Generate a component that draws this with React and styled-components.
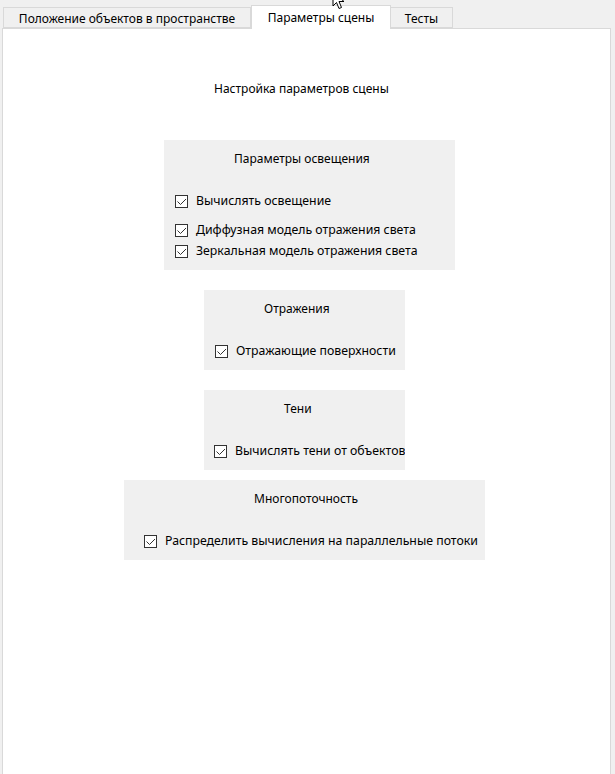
import React from 'react'
import styled, { createGlobalStyle } from 'styled-components'

const Global = createGlobalStyle`
  html, body { margin: 0; padding: 0; }
  body {
    background: #f0f0f0;
    font-family: "Noto Sans", "Liberation Sans", sans-serif;
    font-size: 12px;
    color: #000;
  }
`

const Window = styled.div`
  position: relative;
  width: 615px;
  height: 774px;
  overflow: hidden;
  display: flex;
  flex-direction: column;
  padding: 0 0 0 2px;
  box-sizing: border-box;
`

const TabBar = styled.div`
  display: flex;
  align-items: flex-end;
  height: 28px;
  padding-left: 1px;
  position: relative;
  z-index: 2;
`

const Tab = styled.div`
  box-sizing: border-box;
  height: ${p => (p.active ? '24px' : '21px')};
  margin-bottom: ${p => (p.active ? '-1px' : '0')};
  width: ${p => p.w}px;
  display: flex;
  align-items: center;
  justify-content: center;
  padding-top: ${p => (p.active ? '0' : '1px')};
  background: ${p => (p.active ? '#fff' : '#f0f0f0')};
  border: 1px solid #d9d9d9;
  border-bottom: ${p => (p.active ? 'none' : '1px solid #d9d9d9')};
  border-left: ${p => (p.first || p.active ? '1px solid #d9d9d9' : 'none')};
  white-space: nowrap;
`

const Panel = styled.div`
  width: 609px;
  flex: 1;
  box-sizing: border-box;
  background: #fff;
  border: 1px solid #d9d9d9;
  border-bottom: none;
  display: flex;
  flex-direction: column;
  align-items: flex-start;
  padding-top: 51px;
`

const Heading = styled.div`
  margin-left: 211px;
  height: 18px;
  line-height: 18px;
  margin-bottom: 42px;
`

const Group = styled.div`
  box-sizing: border-box;
  margin-left: ${p => p.left - 3}px;
  width: ${p => p.w}px;
  height: ${p => p.h}px;
  margin-bottom: ${p => p.gap}px;
  background: #f0f0f0;
  display: flex;
  flex-direction: column;
  padding-top: 10px;
  padding-left: ${p => p.inset}px;
  overflow: hidden;
`

const GroupTitle = styled.div`
  margin-left: ${p => p.x}px;
  height: 18px;
  line-height: 18px;
  margin-bottom: 24px;
  white-space: nowrap;
`

const Row = styled.label`
  display: flex;
  align-items: center;
  gap: 8px;
  height: 18px;
  line-height: 18px;
  font-size: 12.3px;
  margin-top: ${p => p.top || 0}px;
  white-space: nowrap;
`

const Box = styled.span`
  box-sizing: border-box;
  width: 13px;
  height: 13px;
  border: 1px solid #333;
  background: #fff;
  display: flex;
  align-items: center;
  justify-content: center;
  flex: none;
`

const Cursor = styled.svg`
  position: absolute;
  left: 332px;
  top: -9px;
  z-index: 5;
`

const Check = ({ label, top }) => (
  <Row top={top}>
    <Box>
      <svg width="11" height="11" viewBox="0 0 11 11">
        <path d="M1.5 5.5 L4.5 8.5 L10 3" fill="none" stroke="#333" strokeWidth="1" />
      </svg>
    </Box>
    {label}
  </Row>
)

export default function App() {
  return (
    <>
      <Global />
      <Window>
        <TabBar>
          <Tab first w={248}>Положение объектов в пространстве</Tab>
          <Tab active w={140}>Параметры сцены</Tab>
          <Tab w={62}>Тесты</Tab>
        </TabBar>
        <Panel>
          <Heading>Настройка параметров сцены</Heading>

          <Group left={164} w={291} h={130} gap={20} inset={11}>
            <GroupTitle x={59}>Параметры освещения</GroupTitle>
            <Check label="Вычислять освещение" />
            <Check label="Диффузная модель отражения света" top={11} />
            <Check label="Зеркальная модель отражения света" top={3} />
          </Group>

          <Group left={204} w={201} h={80} gap={20} inset={11}>
            <GroupTitle x={49}>Отражения</GroupTitle>
            <Check label="Отражающие поверхности" />
          </Group>

          <Group left={204} w={201} h={80} gap={10} inset={10}>
            <GroupTitle x={70}>Тени</GroupTitle>
            <Check label="Вычислять тени от объектов" />
          </Group>

          <Group left={124} w={361} h={80} gap={0} inset={20}>
            <GroupTitle x={110}>Многопоточность</GroupTitle>
            <Check label="Распределить вычисления на параллельные потоки" />
          </Group>
        </Panel>
        <Cursor width="14" height="20" viewBox="0 0 14 20">
          <path d="M1 1 L1 15 L4.5 11.5 L7 17.5 L9.5 16.5 L7 10.5 L12 10.5 Z" fill="#fff" stroke="#000" strokeWidth="1" strokeLinejoin="round" />
        </Cursor>
      </Window>
    </>
  )
}
